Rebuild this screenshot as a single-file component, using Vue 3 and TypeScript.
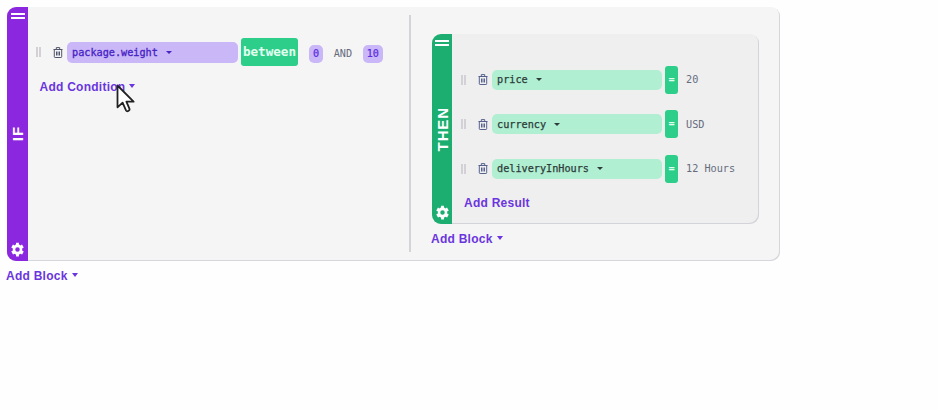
<script setup lang="ts">
interface Result {
  name: string
  value: string
}

const results: Result[] = [
  { name: 'price', value: '20' },
  { name: 'currency', value: 'USD' },
  { name: 'deliveryInHours', value: '12 Hours' },
]

const gearPath =
  'M19.4 13.500a7.6 7.6 0 0 0 0-3l2.600-1.600-2.800-4.900-2.800 1.400a8 8 0 0 0-2.200-1.300L14.200 1H9.800L9.600 4.100a8 8 0 0 0-2.200 1.300L4.800 4 2 8.900 4.600 10.500a7.600 7.600 0 0 0 0 3l-2.600 1.600 2.800 4.900 2.600-1.400a8 8 0 0 0 2.200 1.300l.2 3.100h4.400l.2-3.100a8 8 0 0 0 2.200-1.300l2.800 1.400 2.600-4.900zM12 15.600a3.600 3.600 0 1 1 0-7.200 3.600 3.600 0 0 1 0 7.200z'
const trashPath = 'M.5 2.500h9M3.300 2.300V.6h3.400v1.700M1.300 2.600v7.100q0 .8.800.8h5.800q.8 0 .8-.8V2.600M3.500 4.500v4M5 4.500v4M6.500 4.500v4'
</script>

<template>
  <main class="editor">
    <section class="block if-block">
      <div class="rail purple">
        <span class="bars"></span>
        <span class="rail-label">IF</span>
        <svg class="gear" viewBox="0 0 24 24"><path :d="gearPath" /></svg>
      </div>

      <div class="conditions">
        <div class="condition">
          <span class="grip"></span>
          <svg class="trash" viewBox="0 0 10 11"><path :d="trashPath" /></svg>
          <div class="field violet">package.weight<i class="caret"></i></div>
          <div class="operator between">between</div>
          <span class="chip">0</span>
          <span class="and">AND</span>
          <span class="chip">10</span>
        </div>
        <div class="link add-condition">
          Add Condition<i class="caret big"></i>
          <svg class="cursor" viewBox="0 0 20 30">
            <path d="M1.500 1.500V23.300L6.600 18.600 10 26.300Q10.700 27.700 12.300 27Q14 26.200 13.400 24.700L10.400 17.700H17.600Z" />
          </svg>
        </div>
      </div>

      <div class="divider"></div>

      <div class="outcome">
        <section class="block then-block">
          <div class="rail green">
            <span class="bars"></span>
            <span class="rail-label">THEN</span>
            <svg class="gear" viewBox="0 0 24 24"><path :d="gearPath" /></svg>
          </div>
          <div class="results">
            <div v-for="r in results" :key="r.name" class="result">
              <span class="grip"></span>
              <svg class="trash" viewBox="0 0 10 11"><path :d="trashPath" /></svg>
              <div class="field mint">{{ r.name }}<i class="caret"></i></div>
              <div class="operator">=</div>
              <span class="value">{{ r.value }}</span>
            </div>
            <div class="link add-result">Add Result</div>
          </div>
        </section>
        <div class="link add-inner">Add Block<i class="caret big"></i></div>
      </div>
    </section>
    <div class="link add-outer">Add Block<i class="caret big"></i></div>
  </main>
</template>

<style>
body {
  background: #fefefe;
}
</style>

<style scoped>
.editor {
  box-sizing: border-box;
  height: 410px;
  padding: 7px 0 0 7px;
  overflow: hidden;
  background: #fefefe;
  font-family: "DejaVu Sans Mono", "Liberation Mono", monospace;
  font-size: 10.200px;
  color: #666c7c;
}
.block {
  box-sizing: border-box;
  display: flex;
  overflow: hidden;
  border-radius: 9px;
}
.if-block {
  width: 773px;
  height: 254px;
  background: #f5f5f6;
  box-shadow: inset -1px -1px 0 #d6d6dc;
}
.then-block {
  width: 327px;
  height: 190px;
  background: #efeff0;
  box-shadow: inset -1px -1px 0 #d3d3da;
}
.rail {
  flex: none;
  box-sizing: border-box;
  display: flex;
  flex-direction: column;
  align-items: center;
  justify-content: space-between;
  padding: 6px 0 4px;
  color: #fff;
}
.purple {
  width: 21px;
  background: #8b27df;
}
.green {
  width: 20px;
  background: #1bae70;
}
.bars {
  box-sizing: border-box;
  width: 14px;
  height: 6px;
  border-top: 2px solid #fff;
  border-bottom: 2px solid #fff;
}
.rail-label {
  margin: 7px 0 0 1px;
  writing-mode: vertical-rl;
  transform: rotate(180deg);
  font: bold 15px/20px "Liberation Sans", Arial, sans-serif;
  letter-spacing: 0.900px;
}
.gear {
  width: 15px;
  height: 15px;
  fill: #fff;
}
.purple .gear {
  margin-right: 1px;
}
.conditions {
  flex: none;
  width: 381px;
  padding-top: 31px;
}
.condition,
.result {
  display: flex;
  align-items: center;
  height: 28px;
}
.condition {
  padding-left: 8px;
}
.grip {
  flex: none;
  box-sizing: border-box;
  width: 5px;
  height: 10px;
  border: solid #d3d1d6;
  border-width: 0 2px;
}
.trash {
  flex: none;
  width: 10px;
  height: 11px;
  margin-left: 12px;
  fill: none;
  stroke: #50556b;
  stroke-width: 1;
}
.result .trash {
  stroke: #56618e;
}
.field {
  flex: none;
  box-sizing: border-box;
  display: flex;
  align-items: center;
  width: 171px;
  height: 20px;
  margin-left: 4px;
  padding-left: 5px;
  border-radius: 5px;
}
.violet {
  height: 21px;
  background: #c9b7f8;
  color: #4722c4;
  -webkit-text-stroke: 0.300px #4722c4;
}
.mint {
  width: 170px;
  background: #b1efd2;
  color: #2c3d3a;
  -webkit-text-stroke: 0.250px #2c3d3a;
}
.caret {
  width: 0;
  height: 0;
  margin-left: 8px;
  border: solid transparent;
  border-width: 3px 3px 0;
  border-top-color: currentColor;
}
.caret.big {
  margin: 0 0 3px 4px;
  border-width: 4px 3.500px 0;
  border-top-color: currentColor;
}
.operator {
  flex: none;
  width: 13px;
  height: 28px;
  margin-left: 3px;
  border-radius: 3px;
  background: #2dce89;
  color: #e2fff1;
  font-weight: bold;
  line-height: 28px;
  text-align: center;
}
.between {
  width: 57px;
  font-size: 12.600px;
}
.chip {
  height: 18px;
  margin: 3px 0 0 11px;
  padding: 0 4px;
  border-radius: 5px;
  background: #c9b7f8;
  color: #5b2bdc;
  line-height: 18px;
  -webkit-text-stroke: 0.200px #5b2bdc;
}
.and {
  margin: 3px 0 0 10.500px;
}
.and + .chip {
  margin-left: 10.700px;
}
.link {
  display: flex;
  align-items: center;
  height: 16px;
  color: #6a35de;
  font: bold 12px/16px "Liberation Sans", Arial, sans-serif;
  letter-spacing: 0.250px;
}
.add-condition {
  position: relative;
  margin: 13px 0 0 11.500px;
}
.cursor {
  position: absolute;
  left: 76.500px;
  top: 4.500px;
  width: 20px;
  height: 30px;
  fill: #fff;
  stroke: #222;
  stroke-width: 1.800;
  stroke-linejoin: round;
}
.divider {
  flex: none;
  width: 2px;
  height: 237px;
  margin-top: 8px;
  background: #d3d4d8;
}
.outcome {
  padding: 27px 0 0 21px;
}
.results {
  padding: 31.500px 0 0 9px;
}
.result {
  margin-bottom: 16.500px;
}
.value {
  margin-left: 8px;
}
.add-result {
  margin: -4px 0 0 3px;
}
.add-inner {
  margin: 7px 0 0 -1px;
}
.add-outer {
  margin: 7px 0 0 -1px;
}
</style>
